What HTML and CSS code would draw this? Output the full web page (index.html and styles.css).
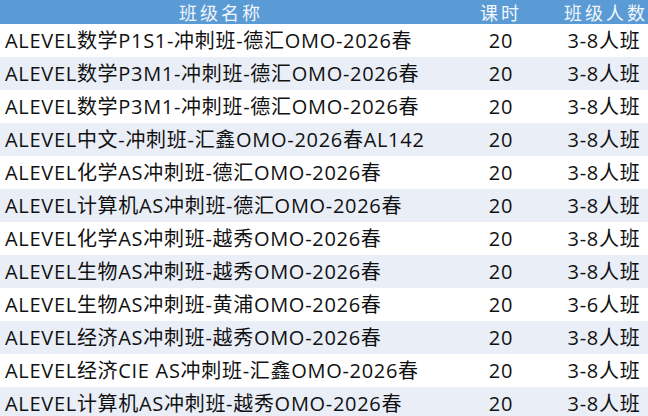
FILE: index.html
```html
<!DOCTYPE html>
<html lang="zh">
<head>
<meta charset="utf-8">
<link rel="stylesheet" href="styles.css">
</head>
<body>
<div class="table">
  <div class="row head">
    <div class="c name">班级名称</div>
    <div class="c hours">课时</div>
    <div class="c size">班级人数</div>
  </div>
  <div class="row"><div class="c name">ALEVEL数学P1S1-冲刺班-德汇OMO-2026春</div><div class="c hours">20</div><div class="c size">3-8人班</div></div>
  <div class="row alt"><div class="c name">ALEVEL数学P3M1-冲刺班-德汇OMO-2026春</div><div class="c hours">20</div><div class="c size">3-8人班</div></div>
  <div class="row"><div class="c name">ALEVEL数学P3M1-冲刺班-德汇OMO-2026春</div><div class="c hours">20</div><div class="c size">3-8人班</div></div>
  <div class="row alt"><div class="c name">ALEVEL中文-冲刺班-汇鑫OMO-2026春AL142</div><div class="c hours">20</div><div class="c size">3-8人班</div></div>
  <div class="row"><div class="c name">ALEVEL化学AS冲刺班-德汇OMO-2026春</div><div class="c hours">20</div><div class="c size">3-8人班</div></div>
  <div class="row alt"><div class="c name">ALEVEL计算机AS冲刺班-德汇OMO-2026春</div><div class="c hours">20</div><div class="c size">3-8人班</div></div>
  <div class="row"><div class="c name">ALEVEL化学AS冲刺班-越秀OMO-2026春</div><div class="c hours">20</div><div class="c size">3-8人班</div></div>
  <div class="row alt"><div class="c name">ALEVEL生物AS冲刺班-越秀OMO-2026春</div><div class="c hours">20</div><div class="c size">3-8人班</div></div>
  <div class="row"><div class="c name">ALEVEL生物AS冲刺班-黄浦OMO-2026春</div><div class="c hours">20</div><div class="c size">3-6人班</div></div>
  <div class="row alt"><div class="c name">ALEVEL经济AS冲刺班-越秀OMO-2026春</div><div class="c hours">20</div><div class="c size">3-8人班</div></div>
  <div class="row"><div class="c name">ALEVEL经济CIE AS冲刺班-汇鑫OMO-2026春</div><div class="c hours">20</div><div class="c size">3-8人班</div></div>
  <div class="row alt"><div class="c name">ALEVEL计算机AS冲刺班-越秀OMO-2026春</div><div class="c hours">20</div><div class="c size">3-8人班</div></div>
</div>
</body>
</html>
```
FILE: styles.css
```css
html, body {
  margin: 0;
  padding: 0;
  background: #ffffff;
  overflow: hidden;
}
.table {
  width: 648px;
  font-family: "Open Sans", "Noto Sans CJK SC", sans-serif;
  color: #111111;
}
.row {
  display: grid;
  grid-template-columns: 442px 118px 88px;
  height: 33px;
  align-items: center;
  font-size: 20px;
  line-height: 24px;
  letter-spacing: 0.7px;
  background: #ffffff;
}
.row.alt {
  background: #e9eef7;
}
.row.head {
  height: 24px;
  background: #5b9bd5;
  color: #f2f6fb;
  font-family: "Noto Sans CJK SC", sans-serif;
  font-size: 18px;
  line-height: 22px;
  letter-spacing: 3px;
}
.c {
  white-space: nowrap;
}
.name {
  padding-left: 5px;
}
.head .name {
  text-align: center;
  padding-left: 0;
}
.hours, .size {
  text-align: center;
}
.head .size {
  text-align: left;
  padding-left: 4px;
}
```
